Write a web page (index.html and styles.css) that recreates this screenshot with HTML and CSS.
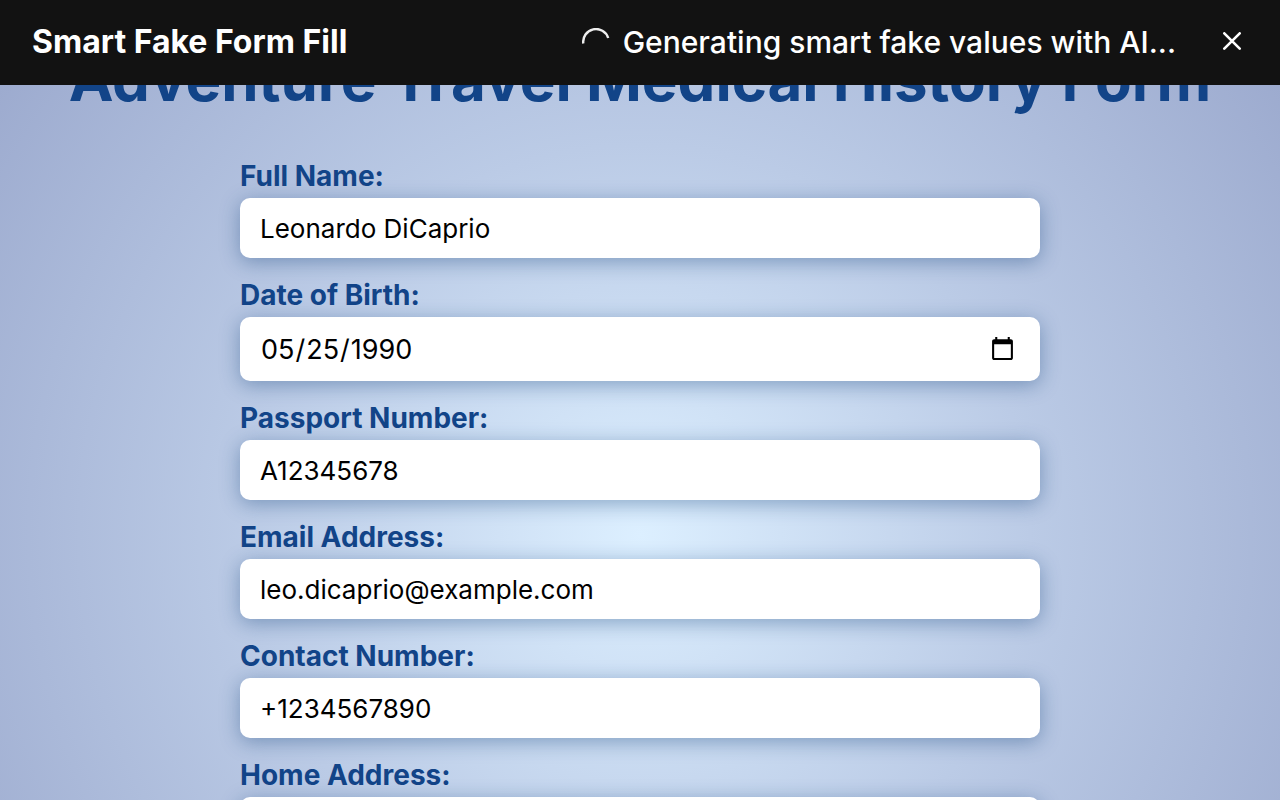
FILE: index.html
```html
<!DOCTYPE html>
<html lang="en">
<head>
<meta charset="utf-8">
<meta name="viewport" content="width=device-width, initial-scale=1">
<title>Adventure Travel Medical History Form</title>
<link rel="stylesheet" href="styles.css">
</head>
<body>
<header class="toolbar">
  <strong class="toolbar-title">Smart Fake Form Fill</strong>
  <div class="toolbar-status" role="status">
    <svg class="spinner" viewBox="0 0 28 28" aria-hidden="true"><path d="M1.3 15.5A12.8 12.8 0 0 1 26.2 10"/></svg>
    <span>Generating smart fake values with AI...</span>
  </div>
  <button class="toolbar-close" type="button" aria-label="Close">
    <svg viewBox="0 0 20 20" aria-hidden="true"><path d="M2.3 1.3L17.7 16.7M17.7 1.3L2.3 16.7"/></svg>
  </button>
</header>
<main class="page">
  <h1 class="page-title">Adventure Travel Medical History Form</h1>
  <form class="form">
    <div class="field">
      <label for="name">Full Name:</label>
      <input class="control" id="name" type="text" value="Leonardo DiCaprio">
    </div>
    <div class="field">
      <label for="dob">Date of Birth:</label>
      <input class="control control-date" id="dob" type="date" value="1990-05-25">
    </div>
    <div class="field">
      <label for="passport">Passport Number:</label>
      <input class="control" id="passport" type="text" value="A12345678">
    </div>
    <div class="field">
      <label for="email">Email Address:</label>
      <input class="control" id="email" type="email" value="leo.dicaprio@example.com">
    </div>
    <div class="field">
      <label for="phone">Contact Number:</label>
      <input class="control" id="phone" type="tel" value="+1234567890">
    </div>
    <div class="field">
      <label for="address">Home Address:</label>
      <input class="control" id="address" type="text">
    </div>
  </form>
</main>
</body>
</html>
```
FILE: styles.css
```css
* { box-sizing: border-box; }

html { height: 100%; }

body {
  height: 100%;
  margin: 0;
  overflow: hidden;
  display: flex;
  flex-direction: column;
  font-family: Inter, "Liberation Sans", sans-serif;
  color: #124488;
  background: radial-gradient(circle at 50% 535px, #dcefff 0, #bbcbe6 390px, #9dabcf 782px);
}

.toolbar {
  flex: none;
  display: flex;
  align-items: center;
  min-height: 85px;
  padding: 0 32px 1px;
  background: #121212;
  color: #fff;
  line-height: 40px;
}

.toolbar-title {
  font-size: 32px;
  font-weight: 700;
}

.toolbar-status {
  display: flex;
  align-items: center;
  gap: 13px;
  margin-left: auto;
  font-size: 30px;
  font-weight: 500;
}

.spinner {
  width: 28px;
  height: 28px;
  fill: none;
  stroke: #eee;
  stroke-width: 2.4;
}

.toolbar-close {
  display: flex;
  margin-left: 40px;
  padding: 6px;
  border: 0;
  background: none;
  color: #fff;
}

.toolbar-close svg {
  width: 20px;
  height: 20px;
  fill: none;
  stroke: currentColor;
  stroke-width: 2.6;
  stroke-linecap: round;
}

.page {
  flex: 1;
  min-height: 0;
  padding: 0 40px;
  overflow: hidden;
}

.page-title {
  margin: -34px 0 52px;
  font-size: 60px;
  line-height: 56px;
  font-weight: 700;
  text-align: center;
  white-space: nowrap;
}

.form {
  display: flex;
  flex-direction: column;
  gap: 20px;
  max-width: 800px;
  margin: 0 auto;
}

.field {
  display: flex;
  flex-direction: column;
  gap: 5px;
}

.field label {
  font-size: 28px;
  line-height: 34px;
  font-weight: 700;
}

.control {
  width: 100%;
  height: 60px;
  padding: 0 20px;
  border: 0;
  border-radius: 10px;
  outline: 0;
  background: #fff;
  box-shadow: 0 4px 20px rgba(18, 64, 120, 0.4);
  color: #000;
  font-family: inherit;
  font-size: 26px;
}

.control-date {
  height: 64px;
  padding: 0 22px 0 20px;
  font-size: 27px;
}
```
